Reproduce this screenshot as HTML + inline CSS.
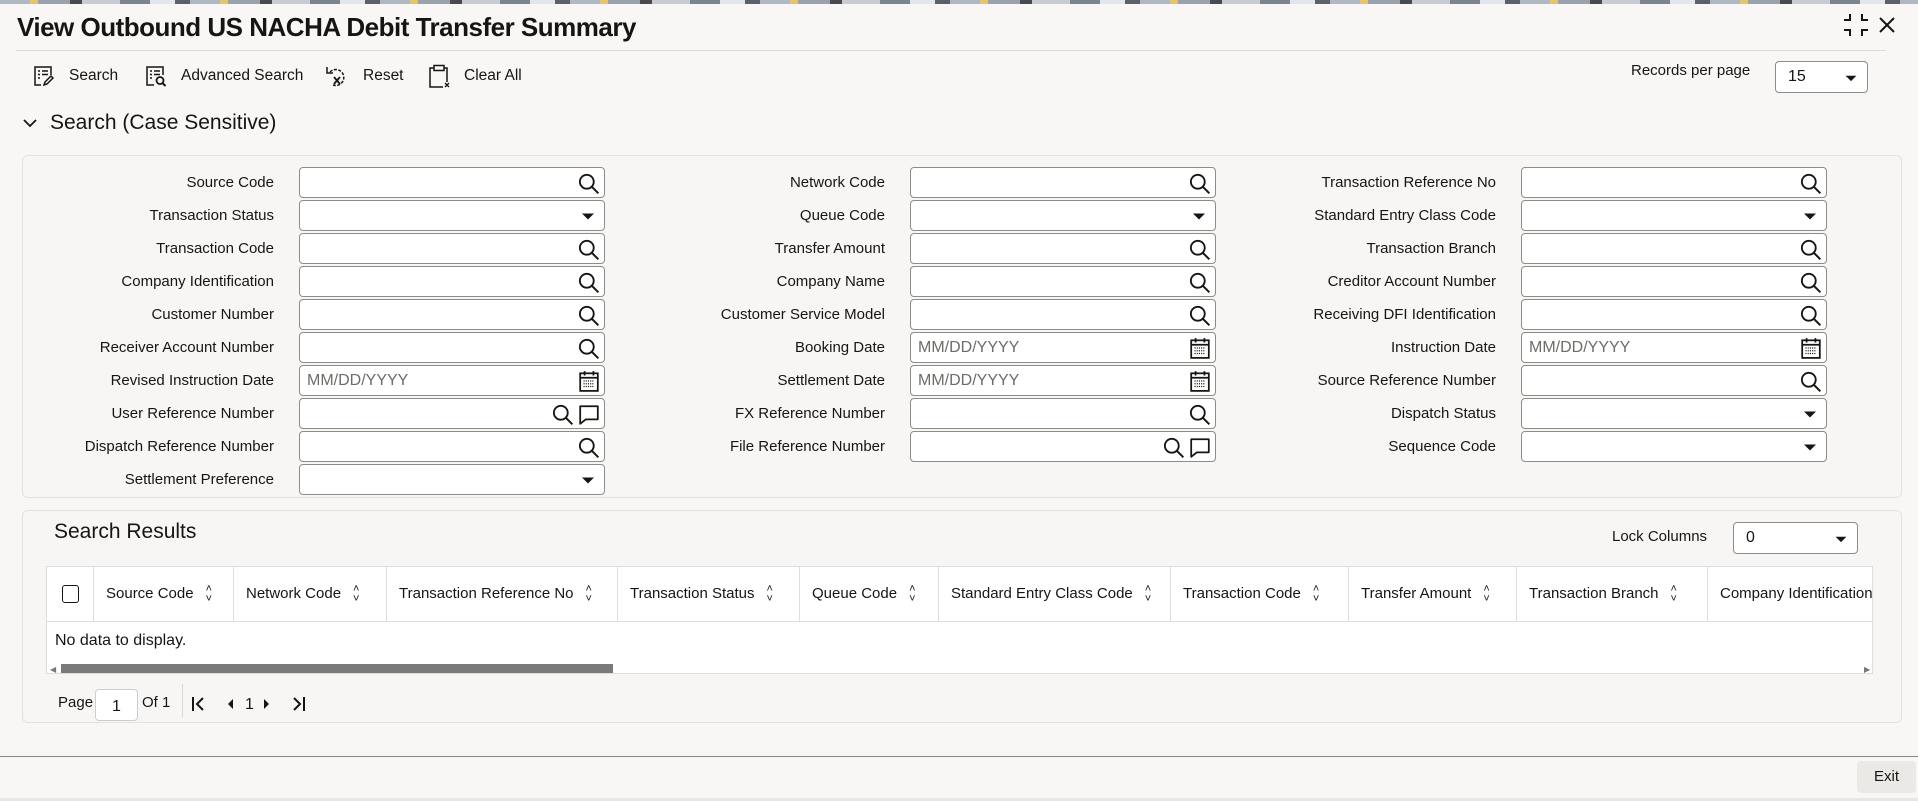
<!DOCTYPE html>
<html><head><meta charset="utf-8">
<style>
*{box-sizing:border-box;margin:0;padding:0}
body{width:1918px;height:801px;overflow:hidden;background:#f8f7f6;font-family:"Liberation Sans",sans-serif;color:#161513;position:relative}
.a{position:absolute}
.band{left:0;top:0;width:1918px;height:4px;background:repeating-linear-gradient(90deg,#b0b8c2 0 30px,#e5c46b 30px 38px,#9aa3ad 38px 70px,#4a4a4e 70px 82px,#c8ccd0 82px 120px,#7b8591 120px 150px,#e3e6ea 150px 175px,#5c6068 175px 190px)}
.title{left:17px;top:12px;font-size:26px;font-weight:bold;letter-spacing:-0.5px}
.hline{left:16px;top:50px;width:1870px;height:1px;background:#dedcd8}
.tb{top:65px;font-size:15.5px;display:flex;align-items:center;height:22px}
.tb svg{margin-right:14px}
.sec{left:22px;top:111px;font-size:21px;display:flex;align-items:center}
.panel{background:#f7f6f4;border:1px solid #e4e2de;border-radius:6px}
.lbl{font-size:15px;text-align:right;width:260px;height:31px;line-height:31px}
.inp{width:306px;height:31px;background:#fff;border:1px solid #8f8c88;border-radius:4px}
.inp .ph{position:absolute;left:7px;top:0;line-height:30px;font-size:16px;color:#6f6c68}
.inp svg{position:absolute;top:5px}
.th{top:566px;height:55px;border-right:1px solid #e0deda;font-size:15px;line-height:55px;padding-left:12px;white-space:nowrap;overflow:hidden}
.srt{display:inline-block;margin-left:12px;font-size:11px;vertical-align:top;line-height:10px;position:relative;top:18px}
</style></head><body>
<svg width="0" height="0" style="position:absolute">
<defs>
<symbol id="mag" viewBox="0 0 20 20"><circle cx="8" cy="8" r="6.3" fill="none" stroke="#161513" stroke-width="1.7"/><path d="M12.6 12.6L18.5 18.5" stroke="#161513" stroke-width="1.8"/></symbol>
<symbol id="dd" viewBox="0 0 20 20"><path d="M4 7.5h12l-6 6z" fill="#161513"/></symbol>
<symbol id="cal" viewBox="0 0 20 20"><rect x="2" y="3" width="16" height="16" fill="none" stroke="#161513" stroke-width="1.6"/><path d="M2 7h16M6 1v4M14 1v4" stroke="#161513" stroke-width="1.6"/><path d="M5 10h10M5 12.5h10M5 15h10" stroke="#161513" stroke-width="1.2" stroke-dasharray="1 1"/></symbol>
<symbol id="msg" viewBox="0 0 20 20"><path d="M2 2h16v12H7l-5 4z" fill="none" stroke="#161513" stroke-width="1.6" stroke-linejoin="round"/></symbol>
</defs></svg>
<div class="a band"></div>
<div class="a title">View Outbound US NACHA Debit Transfer Summary</div>
<svg class="a" style="left:1843px;top:13px" width="26" height="24" viewBox="0 0 26 24"><path d="M7 1v6H1M19 1v6h6M7 23v-6H1M19 23v-6h6" fill="none" stroke="#161513" stroke-width="2"/></svg>
<svg class="a" style="left:1879px;top:17px" width="16" height="16" viewBox="0 0 16 16"><path d="M1 1l14 14M15 1L1 15" stroke="#161513" stroke-width="2"/></svg>
<div class="a hline"></div>

<div class="a tb" style="left:33px"><svg width="22" height="22" viewBox="0 0 22 22"><path d="M8 20H2V2h16v8" fill="none" stroke="#161513" stroke-width="1.5"/><path d="M5 6h2M9 6h6M5 9.5h2M9 9.5h6M5 13h2" stroke="#161513" stroke-width="1.5"/><path d="M11 20l1-3 6-6 2 2-6 6z" fill="none" stroke="#161513" stroke-width="1.5"/></svg>Search</div>
<div class="a tb" style="left:145px"><svg width="22" height="22" viewBox="0 0 22 22"><path d="M9 20H2V2h16v8" fill="none" stroke="#161513" stroke-width="1.5"/><path d="M5 6h2M9 6h6M5 9.5h2M9 9.5h6M5 13h2" stroke="#161513" stroke-width="1.5"/><circle cx="15" cy="15.5" r="3.5" fill="none" stroke="#161513" stroke-width="1.8"/><path d="M17.5 18l3 3" stroke="#161513" stroke-width="2"/></svg>Advanced Search</div>
<div class="a tb" style="left:325px"><svg width="24" height="24" viewBox="0 0 24 24"><path d="M5 8a8 8 0 1 1 3 13" fill="none" stroke="#161513" stroke-width="1.5" stroke-dasharray="3 1.5"/><path d="M2 3v6h6" fill="none" stroke="#161513" stroke-width="1.5"/><path d="M9 13l6 7M15 13l-6 7" stroke="#161513" stroke-width="1.8"/></svg>Reset</div>
<div class="a tb" style="left:428px"><svg width="22" height="24" viewBox="0 0 22 24"><path d="M6 4H2v19h13M16 4h3v14" fill="none" stroke="#161513" stroke-width="1.5"/><rect x="6" y="1.5" width="10" height="5" fill="none" stroke="#161513" stroke-width="1.5"/><path d="M17 19l4 4M21 19l-4 4" stroke="#161513" stroke-width="1.3"/></svg>Clear All</div>

<div class="a" style="left:1631px;top:62px;font-size:15px">Records per page</div>
<div class="a inp" style="left:1775px;top:61px;width:93px;height:32px"><span class="ph" style="color:#161513;left:12px">15</span><svg style="right:7px;width:18px;height:18px;top:7px"><use href="#dd"/></svg></div>

<div class="a sec"><svg width="16" height="16" viewBox="0 0 16 16" style="margin-right:12px"><path d="M2 5l6 6 6-6" fill="none" stroke="#161513" stroke-width="1.8"/></svg>Search (Case Sensitive)</div>

<div class="a panel" style="left:22px;top:155px;width:1880px;height:343px"></div>

<!-- col1 -->
<div class="a lbl" style="left:14px;top:167px">Source Code</div>
<div class="a lbl" style="left:14px;top:200px">Transaction Status</div>
<div class="a lbl" style="left:14px;top:233px">Transaction Code</div>
<div class="a lbl" style="left:14px;top:266px">Company Identification</div>
<div class="a lbl" style="left:14px;top:299px">Customer Number</div>
<div class="a lbl" style="left:14px;top:332px">Receiver Account Number</div>
<div class="a lbl" style="left:14px;top:365px">Revised Instruction Date</div>
<div class="a lbl" style="left:14px;top:398px">User Reference Number</div>
<div class="a lbl" style="left:14px;top:431px">Dispatch Reference Number</div>
<div class="a lbl" style="left:14px;top:464px">Settlement Preference</div>
<div class="a inp" style="left:299px;top:167px"><svg style="right:4px;width:22px;height:22px"><use href="#mag"/></svg></div>
<div class="a inp" style="left:299px;top:200px"><svg style="right:6px;width:20px;height:20px"><use href="#dd"/></svg></div>
<div class="a inp" style="left:299px;top:233px"><svg style="right:4px;width:22px;height:22px"><use href="#mag"/></svg></div>
<div class="a inp" style="left:299px;top:266px"><svg style="right:4px;width:22px;height:22px"><use href="#mag"/></svg></div>
<div class="a inp" style="left:299px;top:299px"><svg style="right:4px;width:22px;height:22px"><use href="#mag"/></svg></div>
<div class="a inp" style="left:299px;top:332px"><svg style="right:4px;width:22px;height:22px"><use href="#mag"/></svg></div>
<div class="a inp" style="left:299px;top:365px"><span class="ph">MM/DD/YYYY</span><svg style="right:4px;width:22px;height:22px;top:4px"><use href="#cal"/></svg></div>
<div class="a inp" style="left:299px;top:398px"><svg style="right:30px;width:22px;height:22px"><use href="#mag"/></svg><svg style="right:4px;width:22px;height:22px"><use href="#msg"/></svg></div>
<div class="a inp" style="left:299px;top:431px"><svg style="right:4px;width:22px;height:22px"><use href="#mag"/></svg></div>
<div class="a inp" style="left:299px;top:464px"><svg style="right:6px;width:20px;height:20px"><use href="#dd"/></svg></div>

<!-- col2 -->
<div class="a lbl" style="left:625px;top:167px">Network Code</div>
<div class="a lbl" style="left:625px;top:200px">Queue Code</div>
<div class="a lbl" style="left:625px;top:233px">Transfer Amount</div>
<div class="a lbl" style="left:625px;top:266px">Company Name</div>
<div class="a lbl" style="left:625px;top:299px">Customer Service Model</div>
<div class="a lbl" style="left:625px;top:332px">Booking Date</div>
<div class="a lbl" style="left:625px;top:365px">Settlement Date</div>
<div class="a lbl" style="left:625px;top:398px">FX Reference Number</div>
<div class="a lbl" style="left:625px;top:431px">File Reference Number</div>
<div class="a inp" style="left:910px;top:167px"><svg style="right:4px;width:22px;height:22px"><use href="#mag"/></svg></div>
<div class="a inp" style="left:910px;top:200px"><svg style="right:6px;width:20px;height:20px"><use href="#dd"/></svg></div>
<div class="a inp" style="left:910px;top:233px"><svg style="right:4px;width:22px;height:22px"><use href="#mag"/></svg></div>
<div class="a inp" style="left:910px;top:266px"><svg style="right:4px;width:22px;height:22px"><use href="#mag"/></svg></div>
<div class="a inp" style="left:910px;top:299px"><svg style="right:4px;width:22px;height:22px"><use href="#mag"/></svg></div>
<div class="a inp" style="left:910px;top:332px"><span class="ph">MM/DD/YYYY</span><svg style="right:4px;width:22px;height:22px;top:4px"><use href="#cal"/></svg></div>
<div class="a inp" style="left:910px;top:365px"><span class="ph">MM/DD/YYYY</span><svg style="right:4px;width:22px;height:22px;top:4px"><use href="#cal"/></svg></div>
<div class="a inp" style="left:910px;top:398px"><svg style="right:4px;width:22px;height:22px"><use href="#mag"/></svg></div>
<div class="a inp" style="left:910px;top:431px"><svg style="right:30px;width:22px;height:22px"><use href="#mag"/></svg><svg style="right:4px;width:22px;height:22px"><use href="#msg"/></svg></div>

<!-- col3 -->
<div class="a lbl" style="left:1236px;top:167px">Transaction Reference No</div>
<div class="a lbl" style="left:1236px;top:200px">Standard Entry Class Code</div>
<div class="a lbl" style="left:1236px;top:233px">Transaction Branch</div>
<div class="a lbl" style="left:1236px;top:266px">Creditor Account Number</div>
<div class="a lbl" style="left:1236px;top:299px">Receiving DFI Identification</div>
<div class="a lbl" style="left:1236px;top:332px">Instruction Date</div>
<div class="a lbl" style="left:1236px;top:365px">Source Reference Number</div>
<div class="a lbl" style="left:1236px;top:398px">Dispatch Status</div>
<div class="a lbl" style="left:1236px;top:431px">Sequence Code</div>
<div class="a inp" style="left:1521px;top:167px"><svg style="right:4px;width:22px;height:22px"><use href="#mag"/></svg></div>
<div class="a inp" style="left:1521px;top:200px"><svg style="right:6px;width:20px;height:20px"><use href="#dd"/></svg></div>
<div class="a inp" style="left:1521px;top:233px"><svg style="right:4px;width:22px;height:22px"><use href="#mag"/></svg></div>
<div class="a inp" style="left:1521px;top:266px"><svg style="right:4px;width:22px;height:22px"><use href="#mag"/></svg></div>
<div class="a inp" style="left:1521px;top:299px"><svg style="right:4px;width:22px;height:22px"><use href="#mag"/></svg></div>
<div class="a inp" style="left:1521px;top:332px"><span class="ph">MM/DD/YYYY</span><svg style="right:4px;width:22px;height:22px;top:4px"><use href="#cal"/></svg></div>
<div class="a inp" style="left:1521px;top:365px"><svg style="right:4px;width:22px;height:22px"><use href="#mag"/></svg></div>
<div class="a inp" style="left:1521px;top:398px"><svg style="right:6px;width:20px;height:20px"><use href="#dd"/></svg></div>
<div class="a inp" style="left:1521px;top:431px"><svg style="right:6px;width:20px;height:20px"><use href="#dd"/></svg></div>

<!-- results -->
<div class="a panel" style="left:22px;top:510px;width:1880px;height:213px"></div>
<div class="a" style="left:54px;top:520px;font-size:21px">Search Results</div>
<div class="a" style="left:1612px;top:528px;font-size:15px">Lock Columns</div>
<div class="a inp" style="left:1733px;top:522px;width:125px;height:32px"><span class="ph" style="color:#161513;left:12px">0</span><svg style="right:7px;width:18px;height:18px;top:7px"><use href="#dd"/></svg></div>

<div class="a" style="left:46px;top:566px;width:1827px;height:108px;background:#fff;border:1px solid #e0deda;overflow:hidden"></div>
<div class="a" style="left:46px;top:621px;width:1827px;height:1px;background:#e0deda"></div>
<div class="a th" style="left:46px;width:48px"><div class="a" style="left:16px;top:19px;width:17px;height:18px;border:1.5px solid #161513;border-radius:3px"></div></div>
<div class="a th" style="left:94px;width:140px">Source Code<span class="srt">˄<br>˅</span></div>
<div class="a th" style="left:234px;width:153px">Network Code<span class="srt">˄<br>˅</span></div>
<div class="a th" style="left:387px;width:231px">Transaction Reference No<span class="srt">˄<br>˅</span></div>
<div class="a th" style="left:618px;width:182px">Transaction Status<span class="srt">˄<br>˅</span></div>
<div class="a th" style="left:800px;width:139px">Queue Code<span class="srt">˄<br>˅</span></div>
<div class="a th" style="left:939px;width:232px">Standard Entry Class Code<span class="srt">˄<br>˅</span></div>
<div class="a th" style="left:1171px;width:178px">Transaction Code<span class="srt">˄<br>˅</span></div>
<div class="a th" style="left:1349px;width:168px">Transfer Amount<span class="srt">˄<br>˅</span></div>
<div class="a th" style="left:1517px;width:191px">Transaction Branch<span class="srt">˄<br>˅</span></div>
<div class="a th" style="left:1708px;width:165px;border-right:none">Company Identification</div>
<div class="a" style="left:55px;top:632px;font-size:16px">No data to display.</div>
<div class="a" style="left:50px;top:665px;font-size:8px;color:#777">◀</div>
<div class="a" style="left:61px;top:664px;width:552px;height:9px;background:#7a7a7a"></div>
<div class="a" style="left:1864px;top:665px;font-size:8px;color:#777">▶</div>

<div class="a" style="left:58px;top:694px;font-size:15px">Page</div>
<div class="a" style="left:95px;top:689px;width:43px;height:32px;background:#fff;border:1px solid #cfcdc9;border-radius:4px;font-size:16px;text-align:center;line-height:34px">1</div>
<div class="a" style="left:142px;top:694px;font-size:15px">Of 1</div>
<div class="a" style="left:182px;top:684px;width:1px;height:34px;background:#dcdad6"></div>
<svg class="a" style="left:191px;top:695px" width="120" height="18" viewBox="0 0 120 18"><path d="M2 2v14M12 3l-6 6 6 6" fill="none" stroke="#161513" stroke-width="2"/><path d="M42 4l-5 5 5 5z" fill="#161513"/><path d="M73 4l5 5-5 5z" fill="#161513"/><path d="M103 3l6 6-6 6M113 2v14" fill="none" stroke="#161513" stroke-width="2"/></svg>
<div class="a" style="left:245px;top:696px;font-size:16px">1</div>

<div class="a" style="left:0;top:756px;width:1918px;height:1px;background:#8a8884"></div>
<div class="a" style="left:0;top:798px;width:1918px;height:3px;background:#e8e6e3"></div>
<div class="a" style="left:1857px;top:761px;width:59px;height:32px;background:#ebe9e6;border-radius:4px;font-size:15px;text-align:center;line-height:32px">Exit</div>
</body></html>
